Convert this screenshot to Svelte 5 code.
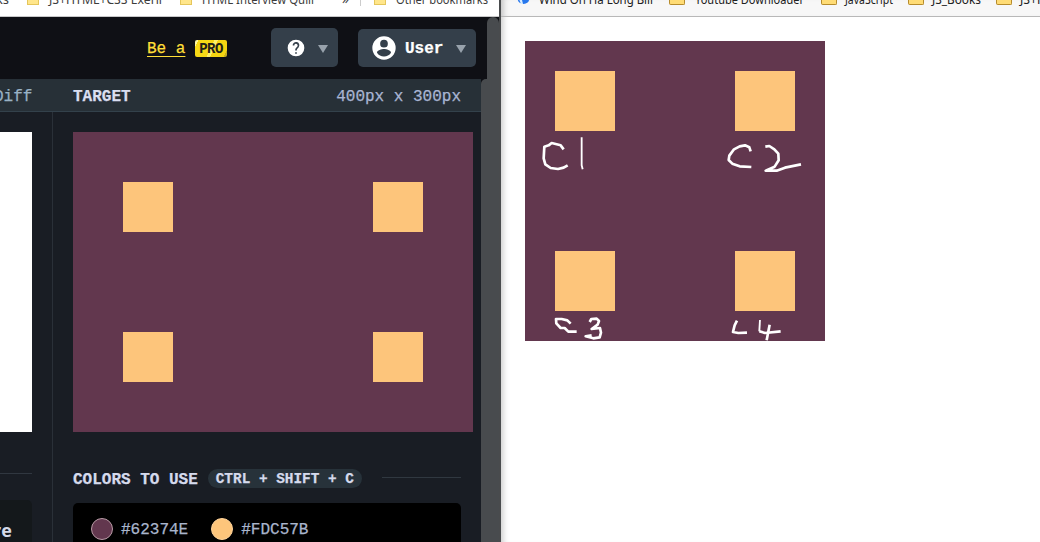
<script>
  const leftMarks = [
    { text: 'ks', gap: -4, width: 13, icon: false },
    { text: 'JS+HTML+CSS Exerii', gap: 18, width: 113, icon: true },
    { text: 'HTML Interview Quiii', gap: 18, width: 112, icon: true }
  ];
  const rightMarks = [
    { text: 'Youtube Downloader', gap: 16, width: 109 },
    { text: 'JavaScript', gap: 17, width: 48 },
    { text: 'JS_Books', gap: 15, width: 49 },
    { text: 'JS+HTML', gap: 15, width: 50 }
  ];
  const swatches = ['#62374E', '#FDC57B'];
</script>

{#snippet label(text, width)}
  <svg class="label" {width} height="16" style:width="{width}px">
    <text x="0" y="11" textLength={width} lengthAdjust="spacingAndGlyphs">{text}</text>
  </svg>
{/snippet}

<div class="screen">
  <section class="left">
    <div class="bookmarks">
      {#each leftMarks as m}
        <div class="mark" style:margin-left="{m.gap}px">
          {#if m.icon}<i class="folder"></i>{/if}
          {@render label(m.text, m.width)}
        </div>
      {/each}
      <span class="more">»</span>
      <i class="divider"></i>
      <div class="mark other"><i class="folder"></i>{@render label('Other bookmarks', 92)}</div>
    </div>
    <div class="app">
      <div class="content">
        <header>
          <span class="be">Be a</span><b class="pro">PRO</b>
          <div class="btn help">
            <svg width="20" height="20" viewBox="0 0 24 24"><path fill="#fff" d="M12 2a10 10 0 1 0 0 20 10 10 0 0 0 0-20zm1 17h-2v-2h2v2zm2.07-7.75-.9.92C13.45 12.9 13 13.5 13 15h-2v-.5c0-1.1.45-2.1 1.17-2.83l1.24-1.26A2 2 0 1 0 10 9H8a4 4 0 1 1 7.07 2.25z" /></svg>
            <i class="caret"></i>
          </div>
          <div class="btn user">
            <svg width="28" height="28" viewBox="0 0 24 24"><path fill="#fff" d="M12 2a10 10 0 1 0 0 20 10 10 0 0 0 0-20zm0 3a3.3 3.3 0 1 1 0 6.6A3.3 3.3 0 0 1 12 5zm0 14.2a7.2 7.2 0 0 1-6-3.2c0-2 4-3.1 6-3.1s6 1.1 6 3.1a7.2 7.2 0 0 1-6 3.2z" /></svg>
            <b>User</b>
            <i class="caret"></i>
          </div>
        </header>
        <div class="work">
          <div class="main">
            <div class="titles">
              <span class="diff">Diff</span><b>TARGET</b><span class="size">400px x 300px</span>
            </div>
            <div class="columns">
              <div class="output">
                <div class="preview"></div>
                <div class="rule"></div>
                <div class="score">re</div>
              </div>
              <div class="target">
                <div class="canvas"><i></i><i></i><i></i><i></i></div>
                <div class="heading"><b>COLORS TO USE</b><kbd>CTRL + SHIFT + C</kbd><hr /></div>
                <div class="colors">
                  {#each swatches as c}
                    <div class="color"><i style:background={c}></i><span>{c}</span></div>
                  {/each}
                </div>
              </div>
            </div>
          </div>
          <div class="inner-scroll"></div>
        </div>
      </div>
      <div class="outer-scroll"></div>
    </div>
  </section>
  <div class="edge"></div>
  <section class="right">
    <div class="bookmarks">
      <div class="mark first">
        <svg class="site" width="13" height="14" viewBox="0 0 13 14"><circle cx="6.5" cy="7" r="6" fill="#2878ed" /><path d="M6 4l2 4-3 1 1 4H4L2 8z" fill="#d9edff" /></svg>
        {@render label('Wind On Ha Long Bill', 114)}
      </div>
      {#each rightMarks as m}
        <div class="mark" style:margin-left="{m.gap}px"><i class="folder"></i>{@render label(m.text, m.width)}</div>
      {/each}
    </div>
    <div class="page">
      <div class="board">
        <i></i><i></i><i></i><i></i>
        <svg class="ink" width="300" height="300" viewBox="0 0 300 300">
          <g transform="translate(5 89) scale(.3333)">
            <path d="M101 58L92 46L65 39L56 46L43 50L41 85L46 103L62 114L84 117L101 113L113 106" />
            <path class="fine" d="M155 22V106L158 118" />
          </g>
          <g transform="translate(190 89) scale(.3333)">
            <path d="M107 64L103 52L90 46L74 49L57 58L43 77L41 90L52 101L74 109L109 111" />
            <path d="M151 50L163 48L178 58L190 71L191 91L179 110L152 122L185 122L210 113L258 103" />
          </g>
          <g transform="translate(5 264) scale(.3333)">
            <path d="M122 56L112 46L95 42L78 42L79 55L92 69L104 69L115 80L140 80" />
            <path d="M179 51L184 42L200 41L207 48L203 59L185 72L210 69L213 83L209 97L190 100L167 94L185 91" />
            <path d="M621 47L614 61L609 81L625 84L651 83" />
            <path class="fine" d="M690 45L688 79" /><path d="M688 79L705 84L752 79" /><path d="M719 59L710 106" />
          </g>
        </svg>
      </div>
    </div>
  </section>
</div>

<style>
  :global(body) { margin: 0; overflow: hidden; }
  * { box-sizing: border-box; }
  i { display: block; flex: none; }
  .screen { display: flex; width: 1040px; height: 542px; overflow: hidden; font: 16px/20px "Liberation Mono", monospace; }
  .left { width: 499px; height: 542px; flex: none; overflow: hidden; display: flex; flex-direction: column; }
  .bookmarks { display: flex; flex: none; height: 16px; overflow: hidden; align-items: flex-start; white-space: nowrap; font: 12px/16px "Open Sans", sans-serif; }
  .left .bookmarks { background: #fff; color: #444; }
  .mark { display: flex; flex: none; gap: 10px; }
  .label { display: block; flex: none; margin-top: -7.5px; overflow: visible; font: 12px "Noto Sans", sans-serif; fill: #3c3c3c; }
  .folder { width: 12px; height: 5px; background: #ffe68b; border: solid #e5c65b; border-width: 0 1px 1px; }
  .more { margin: -9px 0 0 28px; width: 8px; font-size: 14px; }
  .divider { width: 1px; height: 6px; background: #ccc; margin-left: 10px; }
  .other { margin-left: 13px; }
  .app { display: flex; width: 500px; height: 526px; border-top: 1px solid #c8c8c9; background: #0f1015; -webkit-text-stroke: .25px currentColor; }
  .content { width: 487px; flex: none; }
  .outer-scroll { width: 12px; background: #484b4e; border-radius: 6px 6px 0 0; }
  header { height: 62px; display: flex; align-items: center; background: #0f1015; padding-left: 147px; }
  .be { color: #ffdf38; text-decoration: underline; text-underline-offset: 3px; text-decoration-thickness: 1px; width: 39px; padding-top: 2px; }
  .pro { margin: 1px 0 0 9px; width: 32px; height: 17px; line-height: 18px; text-align: center; font-size: 14px; letter-spacing: -.6px; -webkit-text-stroke: 0; color: #222018; background: linear-gradient(115deg, #fff7a0 0 8%, #f7d916 9% 48%, #fff06c 49% 57%, #f5d511 58% 91%, #c4ad20 92%); border-radius: 2px; }
  .btn { display: flex; align-items: center; background: #343f4a; border-radius: 5px; height: 38px; color: #fff; }
  .help { width: 67px; height: 39px; margin: -1px 0 0 44px; padding-left: 15px; gap: 12px; }
  .user { width: 118px; margin-left: 20px; padding-left: 12px; }
  .user b { width: 39px; margin: 2px 0 0 7px; }
  .user .caret { margin-left: 12px; margin-top: 2px; }
  .caret { border: solid transparent; border-width: 8px 5px 0; border-top-color: #98a2ac; margin-top: 3px; }
  .work { display: flex; height: 463px; }
  .main { width: 481px; flex: none; background: #191d24; }
  .inner-scroll { width: 7px; margin-right: -1px; flex: none; background: #484b4e; border-radius: 5px 0 0 0; }
  .titles { height: 33px; display: flex; align-items: center; padding-top: 3px; background: #273037; border-bottom: 1px solid #33414b; color: #a9b5d3; }
  .diff { margin-left: -6px; width: 79px; color: #99b2c5; }
  .titles b { color: #d9def0; }
  .size { margin-left: auto; margin-right: 20px; }
  .columns { display: flex; height: 430px; }
  .output { width: 53px; flex: none; border-right: 1px solid #2a3038; padding-top: 20px; }
  .preview { width: 32px; height: 300px; background: #fff; }
  .rule { width: 32px; height: 1px; margin-top: 41px; background: #303740; }
  .score { width: 32px; height: 70px; margin-top: 26px; background: #14181b; border-radius: 0 5px 0 0; padding-top: 20px; color: #d4dae9; font: bold 18px/20px "Open Sans", sans-serif; -webkit-text-stroke: 0; text-indent: -7px; }
  .target { padding: 20px 0 0 20px; width: 420px; flex: none; }
  .canvas { width: 400px; height: 300px; padding: 50px; background: #62374e; display: grid; grid-template-columns: 50px 50px; grid-template-rows: 50px 50px; justify-content: space-between; align-content: space-between; }
  .canvas i, .board i { background: #fdc57b; }
  .heading { display: flex; align-items: center; height: 20px; margin-top: 37px; width: 388px; color: #d5daec; white-space: nowrap; }
  .heading b { padding-top: 1px; }
  kbd { height: 19px; width: 154px; margin: 0 0 1px 10px; border-radius: 10px; background: #27323a; font: bold 14.4px/21px "Liberation Mono", monospace; text-align: center; }
  hr { border: 0; height: 1px; width: 79px; margin: 0 0 3px auto; background: #303840; }
  .colors { width: 388px; height: 60px; margin-top: 14px; padding: 15px 18px; display: flex; gap: 23px; background: #000; border-radius: 5px; color: #a9b5cc; }
  .color { display: flex; gap: 8px; height: 22px; align-items: center; }
  .color span { padding-top: 2px; }
  .color i { width: 22px; height: 22px; border-radius: 50%; border: 1px solid #b99ba6; }
  .color:nth-child(2) i { border-color: #ffd39a; }
  .edge { width: 2px; background: #494b4d; flex: none; }
  .right { width: 539px; background: #fff; box-shadow: inset 7px 0 6px -5px #c8c8c8; }
  .right .bookmarks { height: 17px; background: #f7f7f7; border-bottom: 1px solid #b8b8b8; box-shadow: inset 7px 0 6px -5px #bbb; }
  .right .mark { gap: 8px; }
  .right .mark:nth-child(2) { gap: 10px; }
  .right .label { fill: #202020; }
  .right .first { margin-left: 16px; gap: 9px; }
  .site { margin-top: -9px; }
  .right .folder { width: 16px; background: #ffdc75; border-color: #b68c2c; border-radius: 0 0 2px 2px; }
  .page { padding: 24px; }
  .board { position: relative; width: 300px; height: 300px; padding: 30px; background: #62374e; display: grid; grid-template-columns: 60px 60px; grid-template-rows: 60px 60px; justify-content: space-between; align-content: space-between; }
  .ink { position: absolute; inset: 0; fill: none; stroke: #fff; stroke-width: 8; stroke-linejoin: round; }
  .fine { stroke-width: 5.5; }
</style>
